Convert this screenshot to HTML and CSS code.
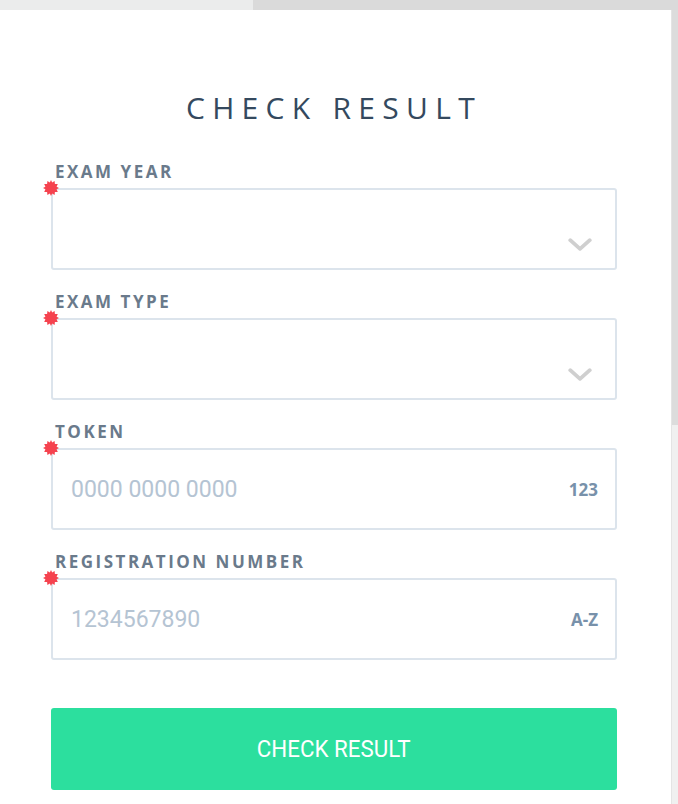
FILE: index.html
```html
<!DOCTYPE html>
<html>
<head>
<meta charset="utf-8">
<link rel="stylesheet" href="styles.css">
</head>
<body>
<div class="topbar"><div class="topbar-left"></div></div>
<div class="main">
  <div class="card">
    <h1 class="title">CHECK RESULT</h1>
    <form class="form">
      <div class="field">
        <label class="label">EXAM YEAR</label>
        <div class="box">
          <svg class="req" viewBox="0 0 16 16"><polygon points="8,0 9.2,2.6 11.6,1 11.9,3.9 14.8,4 13.6,6.7 16,8 13.6,9.3 14.8,12 11.9,12.1 11.6,15 9.2,13.4 8,16 6.8,13.4 4.4,15 4.1,12.1 1.2,12 2.4,9.3 0,8 2.4,6.7 1.2,4 4.1,3.9 4.4,1 6.8,2.6"/></svg>
          <svg class="chev" viewBox="0 0 22 12"><polyline points="2,2 11,10 20,2"/></svg>
        </div>
      </div>
      <div class="field">
        <label class="label">EXAM TYPE</label>
        <div class="box">
          <svg class="req" viewBox="0 0 16 16"><polygon points="8,0 9.2,2.6 11.6,1 11.9,3.9 14.8,4 13.6,6.7 16,8 13.6,9.3 14.8,12 11.9,12.1 11.6,15 9.2,13.4 8,16 6.8,13.4 4.4,15 4.1,12.1 1.2,12 2.4,9.3 0,8 2.4,6.7 1.2,4 4.1,3.9 4.4,1 6.8,2.6"/></svg>
          <svg class="chev" viewBox="0 0 22 12"><polyline points="2,2 11,10 20,2"/></svg>
        </div>
      </div>
      <div class="field">
        <label class="label">TOKEN</label>
        <div class="box">
          <svg class="req" viewBox="0 0 16 16"><polygon points="8,0 9.2,2.6 11.6,1 11.9,3.9 14.8,4 13.6,6.7 16,8 13.6,9.3 14.8,12 11.9,12.1 11.6,15 9.2,13.4 8,16 6.8,13.4 4.4,15 4.1,12.1 1.2,12 2.4,9.3 0,8 2.4,6.7 1.2,4 4.1,3.9 4.4,1 6.8,2.6"/></svg>
          <input class="input" type="text" placeholder="0000 0000 0000">
          <span class="hint">123</span>
        </div>
      </div>
      <div class="field">
        <label class="label">REGISTRATION NUMBER</label>
        <div class="box">
          <svg class="req" viewBox="0 0 16 16"><polygon points="8,0 9.2,2.6 11.6,1 11.9,3.9 14.8,4 13.6,6.7 16,8 13.6,9.3 14.8,12 11.9,12.1 11.6,15 9.2,13.4 8,16 6.8,13.4 4.4,15 4.1,12.1 1.2,12 2.4,9.3 0,8 2.4,6.7 1.2,4 4.1,3.9 4.4,1 6.8,2.6"/></svg>
          <input class="input" type="text" placeholder="1234567890">
          <span class="hint">A-Z</span>
        </div>
      </div>
      <button class="btn" type="button"><span class="btn-text">CHECK RESULT</span></button>
    </form>
  </div>
  <div class="scroll"><div class="scroll-thumb"></div></div>
</div>
</body>
</html>
```
FILE: styles.css
```css
* { box-sizing: border-box; }
html, body { margin: 0; padding: 0; }
body {
  background: #dadada;
  font-family: "Open Sans", "Liberation Sans", sans-serif;
  height: 804px;
  overflow: hidden;
}
.topbar {
  height: 10px;
  background: #dadada;
  display: flex;
}
.topbar-left {
  width: 253px;
  background: #ebecec;
}
.main {
  display: flex;
  height: 794px;
}
.card {
  width: 672px;
  background: #ffffff;
  border-right: 1px solid #e4e4e4;
  padding: 78px 0 0 51px;
}
.scroll {
  width: 6px;
  display: flex;
  flex-direction: column;
  background: #f0f0f0;
}
.scroll-thumb {
  height: 415px;
  background: #dcdcdc;
}
.title {
  margin: 0 0 34px 0;
  width: 566px;
  text-align: center;
  font-size: 30px;
  line-height: 40px;
  font-weight: 400;
  letter-spacing: 7.3px;
  color: #34495e;
}
.form {
  width: 566px;
  display: flex;
  flex-direction: column;
}
.field {
  display: flex;
  flex-direction: column;
  margin-bottom: 22px;
}
.label {
  display: block;
  font-size: 17px;
  line-height: 20px;
  font-weight: 700;
  letter-spacing: 2.5px;
  color: #6a7a8b;
  padding-left: 4px;
  margin-bottom: 6px;
}
.box {
  position: relative;
  height: 82px;
  border: 2px solid #dce4ec;
  border-radius: 3px;
  display: flex;
  align-items: center;
  padding: 0 17px 0 18px;
}
.req {
  position: absolute;
  left: -10px;
  top: -10px;
  width: 16px;
  height: 16px;
  fill: #f5434f;
}
.chev {
  position: absolute;
  right: 23px;
  top: 48px;
  width: 24px;
  height: 13px;
  fill: none;
  stroke: #cfcfcf;
  stroke-width: 3.5;
  stroke-linecap: round;
  stroke-linejoin: round;
}
.input {
  flex: 1;
  border: 0;
  outline: none;
  background: transparent;
  font-family: Roboto, "Liberation Sans", sans-serif;
  font-size: 23px;
  color: #34495e;
  padding: 0;
  margin-top: 0;
}
.input::placeholder {
  color: #b5c4d3;
}
.hint {
  font-family: "Open Sans", "Liberation Sans", sans-serif;
  font-weight: 700;
  font-size: 17px;
  color: #7891aa;
}
.btn {
  margin-top: 26px;
  height: 82px;
  border: 0;
  border-radius: 3px;
  background: #2cdf9e;
  color: #ffffff;
  font-family: Roboto, "Liberation Sans", sans-serif;
  font-size: 24px;
  cursor: pointer;
}
.btn-text {
  display: inline-block;
  transform: scaleX(0.93);
}
```
